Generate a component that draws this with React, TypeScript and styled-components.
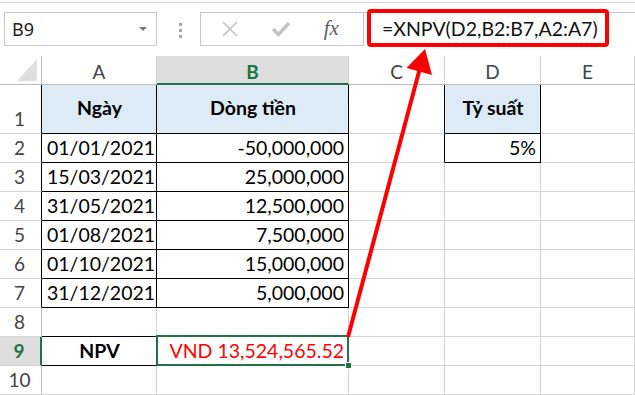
import React from "react"
import styled, { createGlobalStyle } from "styled-components"

const GREEN = "#217346"
const GRID = "#d4d4d4"
const BLACK = "#000000"

const GlobalStyle = createGlobalStyle`
    html, body {
        margin: 0;
        padding: 0;
        background: #ffffff;
        font-family: "Lato", "Liberation Sans", sans-serif;
        overflow: hidden;
    }
`

const Page = styled.div`
    position: relative;
    width: 635px;
    height: 395px;
    overflow: hidden;
`

const Toolbar = styled.div`
    display: flex;
    align-items: flex-start;
    margin-top: 2px;
    height: 54px;
    padding-top: 9px;
    box-sizing: border-box;
    border-top: 1px solid #dadada;
`

const NameBox = styled.div`
    display: flex;
    align-items: center;
    justify-content: space-between;
    width: 153px;
    height: 34px;
    margin-left: 4px;
    padding: 0 9px 0 7px;
    box-sizing: border-box;
    border: 1px solid #c6c6c6;
    font-family: "Noto Sans", sans-serif;
    font-size: 18px;
    color: #222;
`

const DropArrow = styled.span`
    width: 0;
    height: 0;
    border-left: 4px solid transparent;
    border-right: 4px solid transparent;
    border-top: 4px solid #777;
`

const Dots = styled.div`
    display: flex;
    flex-direction: column;
    gap: 3px;
    margin: 11px 0 0 22px;
    span {
        width: 3px;
        height: 3px;
        background: #a6a6a6;
    }
`

const FxBox = styled.div`
    display: flex;
    align-items: center;
    justify-content: space-around;
    width: 164px;
    height: 34px;
    margin-left: 18px;
    padding: 0 8px 0 4px;
    box-sizing: border-box;
    border: 1px solid #c6c6c6;
`

const FxLabel = styled.span`
    font-family: "Liberation Serif", serif;
    font-style: italic;
    font-size: 21px;
    color: #606060;
    margin-top: -2px;
`

const FormulaArea = styled.div`
    flex: 1;
    height: 34px;
    border-top: 1px solid #c6c6c6;
`

const FormulaBox = styled.div`
    display: flex;
    align-items: center;
    width: 242px;
    height: 38px;
    margin: -4px 0 0 3px;
    padding-left: 11px;
    box-sizing: border-box;
    border: 4px solid #ff0000;
    border-radius: 4px;
    font-size: 19.5px;
    color: #111;
    background: #fff;
`

const Sheet = styled.div`
    display: grid;
    grid-template-columns: 42px 115px 192px 96px 96px 94px;
    grid-template-rows: 29px 49px repeat(9, 29px);
`

const Corner = styled.div`
    display: flex;
    align-items: flex-end;
    justify-content: flex-end;
    padding: 0 4px 3px 0;
    box-sizing: border-box;
    border-right: 1px solid #bcbcbc;
    border-bottom: 1px solid #bcbcbc;
    &::after {
        content: "";
        width: 0;
        height: 0;
        border-left: 20px solid transparent;
        border-bottom: 22px solid #dfdfdf;
    }
`

const ColHead = styled.div<{ $sel?: boolean }>`
    display: flex;
    align-items: center;
    justify-content: center;
    box-sizing: border-box;
    padding-top: 3px;
    border-right: 1px solid ${GRID};
    border-bottom: ${({ $sel }) => ($sel ? `2px solid ${GREEN}` : "1px solid #bcbcbc")};
    background: ${({ $sel }) => ($sel ? "#dedede" : "#ffffff")};
    color: ${({ $sel }) => ($sel ? GREEN : "#444")};
    font-weight: ${({ $sel }) => ($sel ? 700 : 400)};
    font-size: 19px;
`

const RowHead = styled.div<{ $sel?: boolean; $edge: string }>`
    display: flex;
    align-items: flex-end;
    justify-content: center;
    box-sizing: border-box;
    padding: 0 2px 3px 0;
    border-right: ${({ $sel, $edge }) => ($sel ? `2px solid ${GREEN}` : `1px solid ${$edge}`)};
    border-bottom: 1px solid ${GRID};
    background: ${({ $sel }) => ($sel ? "#dedede" : "#ffffff")};
    color: ${({ $sel }) => ($sel ? GREEN : "#444")};
    font-weight: ${({ $sel }) => ($sel ? 700 : 400)};
    font-size: 19px;
`

const Cell = styled.div<{
    $right: string
    $bottom: string
    $align: "flex-start" | "center" | "flex-end"
    $mid?: boolean
    $fill?: boolean
    $bold?: boolean
    $color?: string
    $sel?: boolean
}>`
    position: relative;
    display: flex;
    justify-content: ${({ $align }) => $align};
    align-items: ${({ $mid }) => ($mid ? "center" : "flex-end")};
    box-sizing: border-box;
    padding: 0 4px 3px 5px;
    border-right: 1px solid ${({ $right }) => $right};
    border-bottom: 1px solid ${({ $bottom }) => $bottom};
    background: ${({ $fill }) => ($fill ? "#ddebf7" : "transparent")};
    color: ${({ $color }) => $color || "#000"};
    font-weight: ${({ $bold }) => ($bold ? 700 : 400)};
    font-size: 19.5px;
    white-space: nowrap;
    z-index: ${({ $sel }) => ($sel ? 2 : 0)};

    ${({ $sel }) => $sel && `
        &::after {
            content: "";
            position: absolute;
            top: -2px;
            left: -1px;
            right: -1px;
            bottom: -1px;
            border: 2px solid ${GREEN};
        }
        &::before {
            content: "";
            position: absolute;
            right: -4px;
            bottom: -4px;
            width: 5px;
            height: 5px;
            background: ${GREEN};
            border: 1px solid #fff;
            z-index: 3;
        }
    `}
`

const Overlay = styled.svg`
    position: absolute;
    left: 0;
    top: 0;
    pointer-events: none;
    z-index: 5;
`

type CellDef = {
    text: string
    align?: "flex-start" | "center" | "flex-end"
    bold?: boolean
    fill?: boolean
    mid?: boolean
    color?: string
}

const colNames = ["A", "B", "C", "D", "E"]

const data: Record<string, CellDef> = {
    A1: { text: "Ngày", align: "center", bold: true, fill: true, mid: true },
    B1: { text: "Dòng tiền", align: "center", bold: true, fill: true, mid: true },
    D1: { text: "Tỷ suất", align: "center", bold: true, fill: true, mid: true },
    A2: { text: "01/01/2021" },
    A3: { text: "15/03/2021" },
    A4: { text: "31/05/2021" },
    A5: { text: "01/08/2021" },
    A6: { text: "01/10/2021" },
    A7: { text: "31/12/2021" },
    B2: { text: "-50,000,000", align: "flex-end" },
    B3: { text: "25,000,000", align: "flex-end" },
    B4: { text: "12,500,000", align: "flex-end" },
    B5: { text: "7,500,000", align: "flex-end" },
    B6: { text: "15,000,000", align: "flex-end" },
    B7: { text: "5,000,000", align: "flex-end" },
    D2: { text: "5%", align: "flex-end" },
    A9: { text: "NPV", align: "center", bold: true },
    B9: { text: "VND 13,524,565.52", align: "flex-end", color: "#ff0000" },
}

const boxed = new Set([
    "A1", "B1", "A2", "B2", "A3", "B3", "A4", "B4", "A5", "B5", "A6", "B6", "A7", "B7",
    "D1", "D2", "A9", "B9",
])

const isBoxed = (c: number, r: number) => c >= 0 && c < 5 && boxed.has(colNames[c] + r)

const XIcon = () => (
    <svg width="18" height="18" viewBox="0 0 18 18">
        <path d="M2 2 L16 16 M16 2 L2 16" stroke="#c4c4c4" strokeWidth="1.6" fill="none" />
    </svg>
)

const CheckIcon = () => (
    <svg width="20" height="18" viewBox="0 0 20 18">
        <path d="M2 9 L7.5 14.5 L18 3" stroke="#c4c4c4" strokeWidth="3.4" fill="none" />
    </svg>
)

export default function App() {
    const rows = Array.from({ length: 10 }, (_, i) => i + 1)

    return (
        <Page>
            <GlobalStyle />
            <Toolbar>
                <NameBox>
                    B9
                    <DropArrow />
                </NameBox>
                <Dots>
                    <span />
                    <span />
                    <span />
                </Dots>
                <FxBox>
                    <XIcon />
                    <CheckIcon />
                    <FxLabel>fx</FxLabel>
                </FxBox>
                <FormulaArea>
                    <FormulaBox>=XNPV(D2,B2:B7,A2:A7)</FormulaBox>
                </FormulaArea>
            </Toolbar>

            <Sheet>
                <Corner />
                {colNames.map((name) => (
                    <ColHead key={name} $sel={name === "B"}>{name}</ColHead>
                ))}
                {rows.map((r) => (
                    <React.Fragment key={r}>
                        <RowHead $sel={r === 9} $edge={isBoxed(0, r) ? BLACK : "#bcbcbc"}>{r}</RowHead>
                        {colNames.map((name, c) => {
                            const def = data[name + r]
                            const right = isBoxed(c, r) || isBoxed(c + 1, r) ? BLACK : GRID
                            const bottom = isBoxed(c, r) || isBoxed(c, r + 1) ? BLACK : GRID
                            return (
                                <Cell
                                    key={name}
                                    $right={right}
                                    $bottom={bottom}
                                    $align={def?.align || "flex-start"}
                                    $mid={def?.mid}
                                    $fill={def?.fill}
                                    $bold={def?.bold}
                                    $color={def?.color}
                                    $sel={name + r === "B9"}
                                >
                                    {def?.text}
                                </Cell>
                            )
                        })}
                    </React.Fragment>
                ))}
            </Sheet>

            <Overlay width="635" height="395" viewBox="0 0 635 395">
                <line x1="348" y1="337" x2="420" y2="68" stroke="#ff0000" strokeWidth="4" />
                <polygon points="425,49 406.5,68 432,75" fill="#ff0000" />
            </Overlay>
        </Page>
    )
}
